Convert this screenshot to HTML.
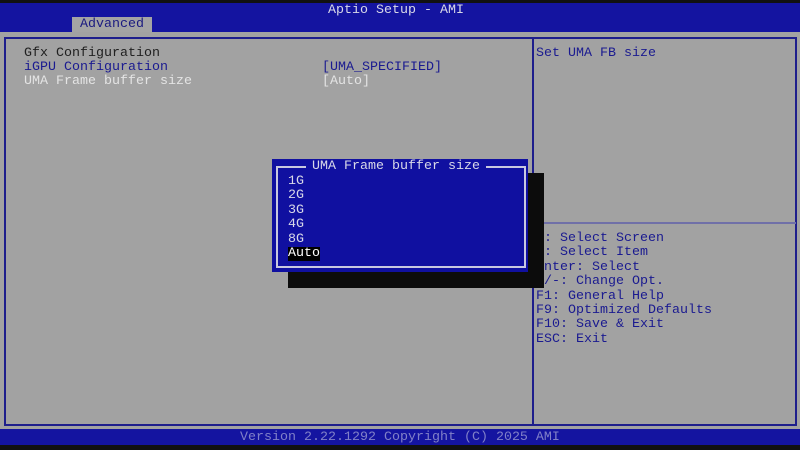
<html><head><style>
body{margin:0;width:800px;height:450px;background:#111;position:relative;overflow:hidden;font-family:"Liberation Mono",monospace;font-size:13.33px;}
div{position:absolute;}
.t{white-space:pre;line-height:14.4px;}
</style></head><body>
<div style="left:0;top:3px;width:800px;height:29px;background:#1414a0"></div>
<div class="t" style="left:328px;top:4px;color:#d8d8e8">Aptio Setup - AMI</div>
<div style="left:72px;top:17px;width:80px;height:15px;background:#a4a4a4"></div>
<div class="t" style="left:80px;top:18px;color:#1a1a80">Advanced</div>
<div style="left:0;top:32px;width:800px;height:397px;background:#a2a2a2"></div>
<div style="left:4px;top:37px;width:526px;height:385px;border:2px solid #1e1e8c"></div>
<div style="left:531px;top:37px;width:264px;height:385px;border:2px solid #1e1e8c;border-left:none"></div>
<div style="left:534px;top:222px;width:262px;height:2px;background:#7070a8"></div>
<div class="t" style="left:24px;top:47px;color:#202020">Gfx Configuration</div>
<div class="t" style="left:24px;top:61px;color:#1a1a90">iGPU Configuration</div>
<div class="t" style="left:24px;top:75px;color:#e4e4e4">UMA Frame buffer size</div>
<div class="t" style="left:322px;top:61px;color:#1a1a90">[UMA_SPECIFIED]</div>
<div class="t" style="left:322px;top:75px;color:#e4e4e4">[Auto]</div>
<div class="t" style="left:536px;top:47px;color:#1a1a90">Set UMA FB size</div>
<div class="t" style="left:536px;top:232px;color:#1a1a90">←: Select Screen
↓: Select Item
Enter: Select
+/-: Change Opt.
F1: General Help
F9: Optimized Defaults
F10: Save &amp; Exit
ESC: Exit</div>
<div style="left:288px;top:173px;width:256px;height:115px;background:#0c0c0c"></div>
<div style="left:272px;top:159px;width:256px;height:113px;background:#1010a0"></div>
<div style="left:276px;top:167px;width:246px;height:99px;border:2px solid #c8c8e0;border-top:none"></div>
<div style="left:276px;top:166px;width:250px;height:2px;background:#c8c8e0"></div>
<div class="t" style="left:306px;top:160px;color:#d8d8e8;background:#1010a0;padding:0 6px">UMA Frame buffer size</div>
<div class="t" style="left:288px;top:175px;color:#d8d8e8">1G
2G
3G
4G
8G</div>
<div class="t" style="left:288px;top:247px;color:#fff;background:#000">Auto</div>
<div style="left:0;top:429px;width:800px;height:16px;background:#1414a0"></div>
<div class="t" style="left:240px;top:431px;color:#8080c8">Version 2.22.1292 Copyright (C) 2025 AMI</div>
</body></html>
